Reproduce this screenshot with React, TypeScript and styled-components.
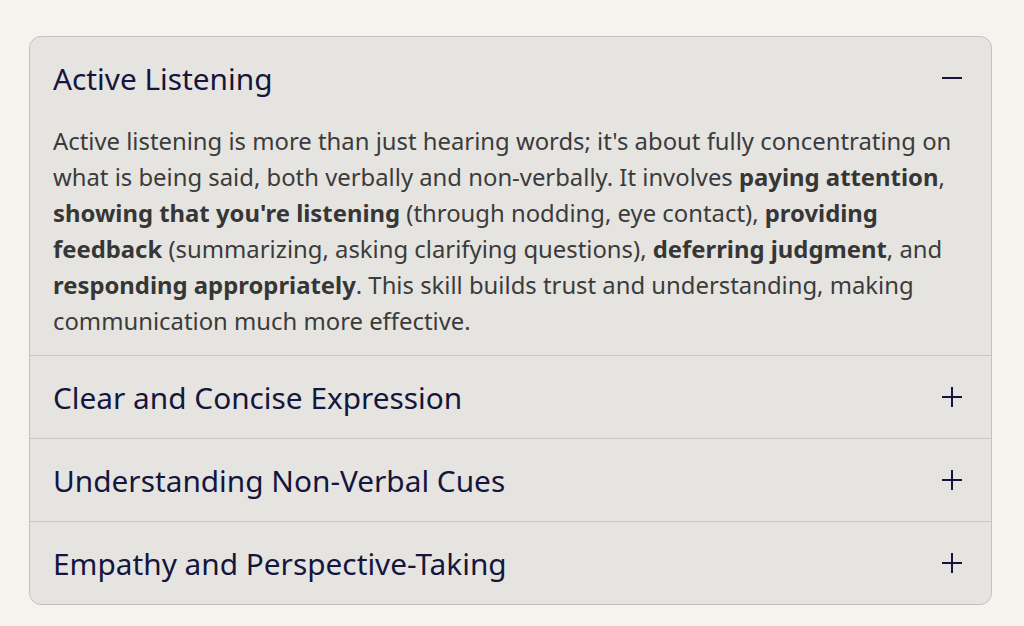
import React, { useState } from 'react';
import styled, { createGlobalStyle } from 'styled-components';

const GlobalStyle = createGlobalStyle`
  html, body {
    margin: 0;
    padding: 0;
    background: #f4f3ee;
  }
  body {
    font-family: "Noto Sans", "Open Sans", sans-serif;
    padding: 36px 32px 0 29px;
  }
`;

const Card = styled.div`
  background: #e5e4e0;
  border: 1px solid #c2c1bd;
  border-radius: 12px;
  overflow: hidden;
`;

const Item = styled.div`
  border-bottom: 1px solid #c8c7c3;

  &:last-child {
    border-bottom: none;
  }
`;

const Header = styled.button`
  display: flex;
  align-items: center;
  justify-content: space-between;
  width: 100%;
  height: 82px;
  padding: 0 28px 0 23px;
  border: none;
  background: transparent;
  cursor: pointer;
  font-family: inherit;
  font-size: 29.8px;
  font-weight: 400;
  color: #15153d;
  text-align: left;
`;

const Content = styled.div`
  padding: 4px 24px 16px 23px;
  font-size: 23.85px;
  line-height: 36px;
  color: #3b3b3b;

  strong {
    font-weight: 700;
    color: #363636;
  }
`;

const Icon: React.FC<{ open: boolean }> = ({ open }) => (
  <svg width="22" height="22" viewBox="0 0 22 22" fill="none" stroke="#15153d" strokeWidth="2">
    <line x1="1" y1="11" x2="21" y2="11" />
    {!open && <line x1="11" y1="1" x2="11" y2="21" />}
  </svg>
);

const items = [
  {
    title: 'Active Listening',
    body: (
      <>
        Active listening is more than just hearing words; it's about fully concentrating on what is being
        said, both verbally and non-verbally. It involves <strong>paying attention</strong>,{' '}
        <strong>showing that you're listening</strong> (through nodding, eye contact),{' '}
        <strong>providing feedback</strong> (summarizing, asking clarifying questions),{' '}
        <strong>deferring judgment</strong>, and <strong>responding appropriately</strong>. This skill
        builds trust and understanding, making communication much more effective.
      </>
    ),
  },
  { title: 'Clear and Concise Expression', body: null },
  { title: 'Understanding Non-Verbal Cues', body: null },
  { title: 'Empathy and Perspective-Taking', body: null },
];

export default function App() {
  const [open, setOpen] = useState(0);
  return (
    <>
      <GlobalStyle />
      <Card>
        {items.map((item, i) => (
          <Item key={item.title}>
            <Header onClick={() => setOpen(open === i ? -1 : i)}>
              {item.title}
              <Icon open={open === i} />
            </Header>
            {open === i && item.body && <Content>{item.body}</Content>}
          </Item>
        ))}
      </Card>
    </>
  );
}
